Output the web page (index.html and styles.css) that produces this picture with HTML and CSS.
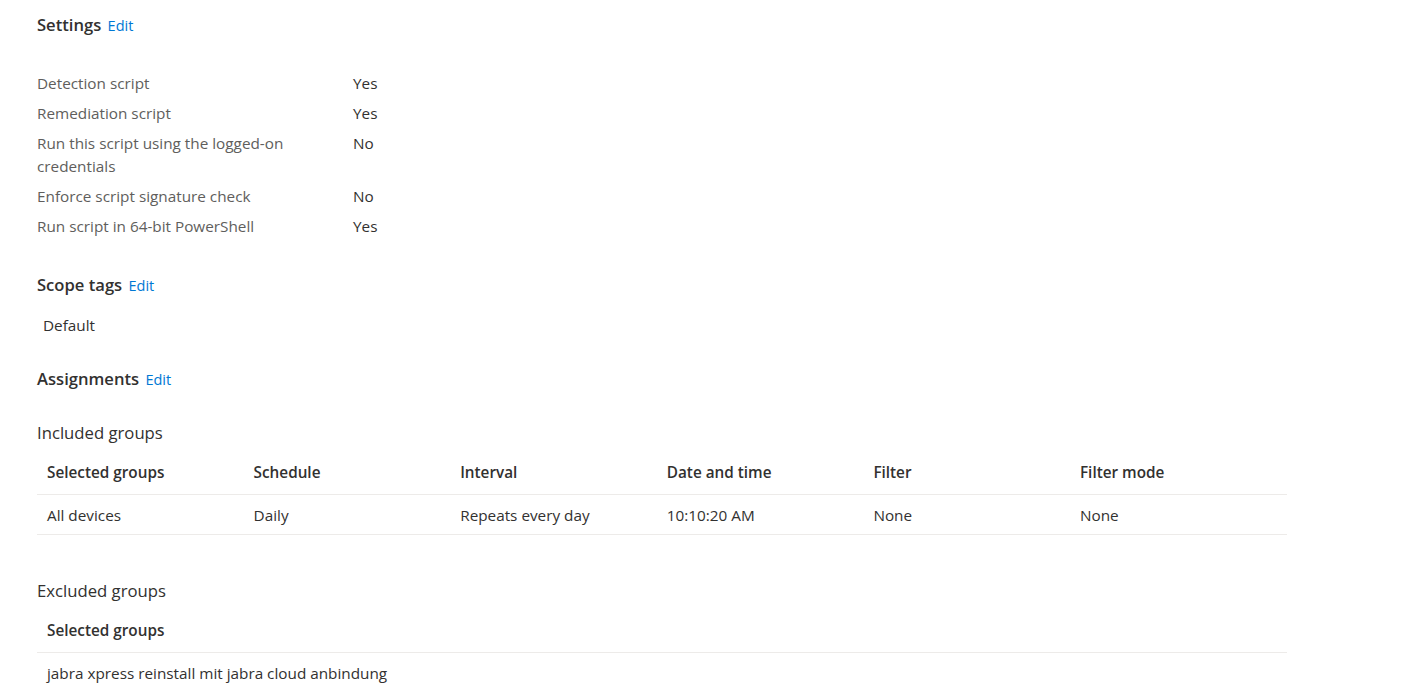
FILE: index.html
```html
<!DOCTYPE html>
<html>
<head>
<meta charset="utf-8">
<link rel="stylesheet" href="styles.css">
</head>
<body>
<div class="page">
  <section class="section settings">
    <h2 class="title">Settings <a class="edit" href="#">Edit</a></h2>
    <div class="props">
      <div class="prop"><div class="label">Detection script</div><div class="value">Yes</div></div>
      <div class="prop"><div class="label">Remediation script</div><div class="value">Yes</div></div>
      <div class="prop"><div class="label">Run this script using the logged-on credentials</div><div class="value">No</div></div>
      <div class="prop"><div class="label">Enforce script signature check</div><div class="value">No</div></div>
      <div class="prop"><div class="label">Run script in 64-bit PowerShell</div><div class="value">Yes</div></div>
    </div>
  </section>
  <section class="section scope">
    <h2 class="title">Scope tags <a class="edit" href="#">Edit</a></h2>
    <div class="tag">Default</div>
  </section>
  <section class="section assign">
    <h2 class="title">Assignments <a class="edit" href="#">Edit</a></h2>
    <h3 class="sub">Included groups</h3>
    <div class="table">
      <div class="row head">
        <div class="cell">Selected groups</div>
        <div class="cell">Schedule</div>
        <div class="cell">Interval</div>
        <div class="cell">Date and time</div>
        <div class="cell">Filter</div>
        <div class="cell">Filter mode</div>
      </div>
      <div class="row">
        <div class="cell">All devices</div>
        <div class="cell">Daily</div>
        <div class="cell">Repeats every day</div>
        <div class="cell">10:10:20 AM</div>
        <div class="cell">None</div>
        <div class="cell">None</div>
      </div>
    </div>
    <h3 class="sub excluded">Excluded groups</h3>
    <div class="table">
      <div class="row head single">
        <div class="cell">Selected groups</div>
      </div>
      <div class="row single">
        <div class="cell">jabra xpress reinstall mit jabra cloud anbindung</div>
      </div>
    </div>
  </section>
</div>
</body>
</html>
```

FILE: styles.css
```css
html, body {
  margin: 0;
  padding: 0;
  background: #ffffff;
}
body {
  font-family: "Open Sans", "Noto Sans", sans-serif;
  font-size: 15.3px;
  color: #323130;
}
.page {
  padding: 12px 37px 0 37px;
}
.title {
  margin: 0;
  font-size: 16.6px;
  font-weight: 600;
  line-height: 26px;
  color: #323130;
}
.edit {
  font-size: 14.5px;
  font-weight: 400;
  color: #0078d4;
  text-decoration: none;
  margin-left: 2px;
}
.props {
  margin-top: 33px;
  display: flex;
  flex-direction: column;
  gap: 7px;
}
.prop {
  display: flex;
  line-height: 23px;
}
.label {
  width: 300px;
  margin-right: 16px;
  color: #605e5c;
}
.value {
  color: #323130;
}
.scope {
  margin-top: 34px;
}
.tag {
  margin-top: 16px;
  padding-left: 6px;
  line-height: 20px;
}
.assign {
  margin-top: 31px;
}
.sub {
  margin: 28px 0 0 0;
  font-size: 16.7px;
  font-weight: 400;
  line-height: 24px;
}
.sub.excluded {
  margin-top: 44px;
}
.table {
  width: 1250px;
  margin-top: 5px;
}
.row {
  display: grid;
  grid-template-columns: repeat(6, 206.6px);
  border-bottom: 1px solid #edebe9;
  height: 39px;
  align-items: center;
}
.row.single {
  grid-template-columns: 1fr;
}
.row.head {
  height: 44px;
  font-weight: 600;
}
.cell {
  padding-left: 10px;
  white-space: nowrap;
}
```
